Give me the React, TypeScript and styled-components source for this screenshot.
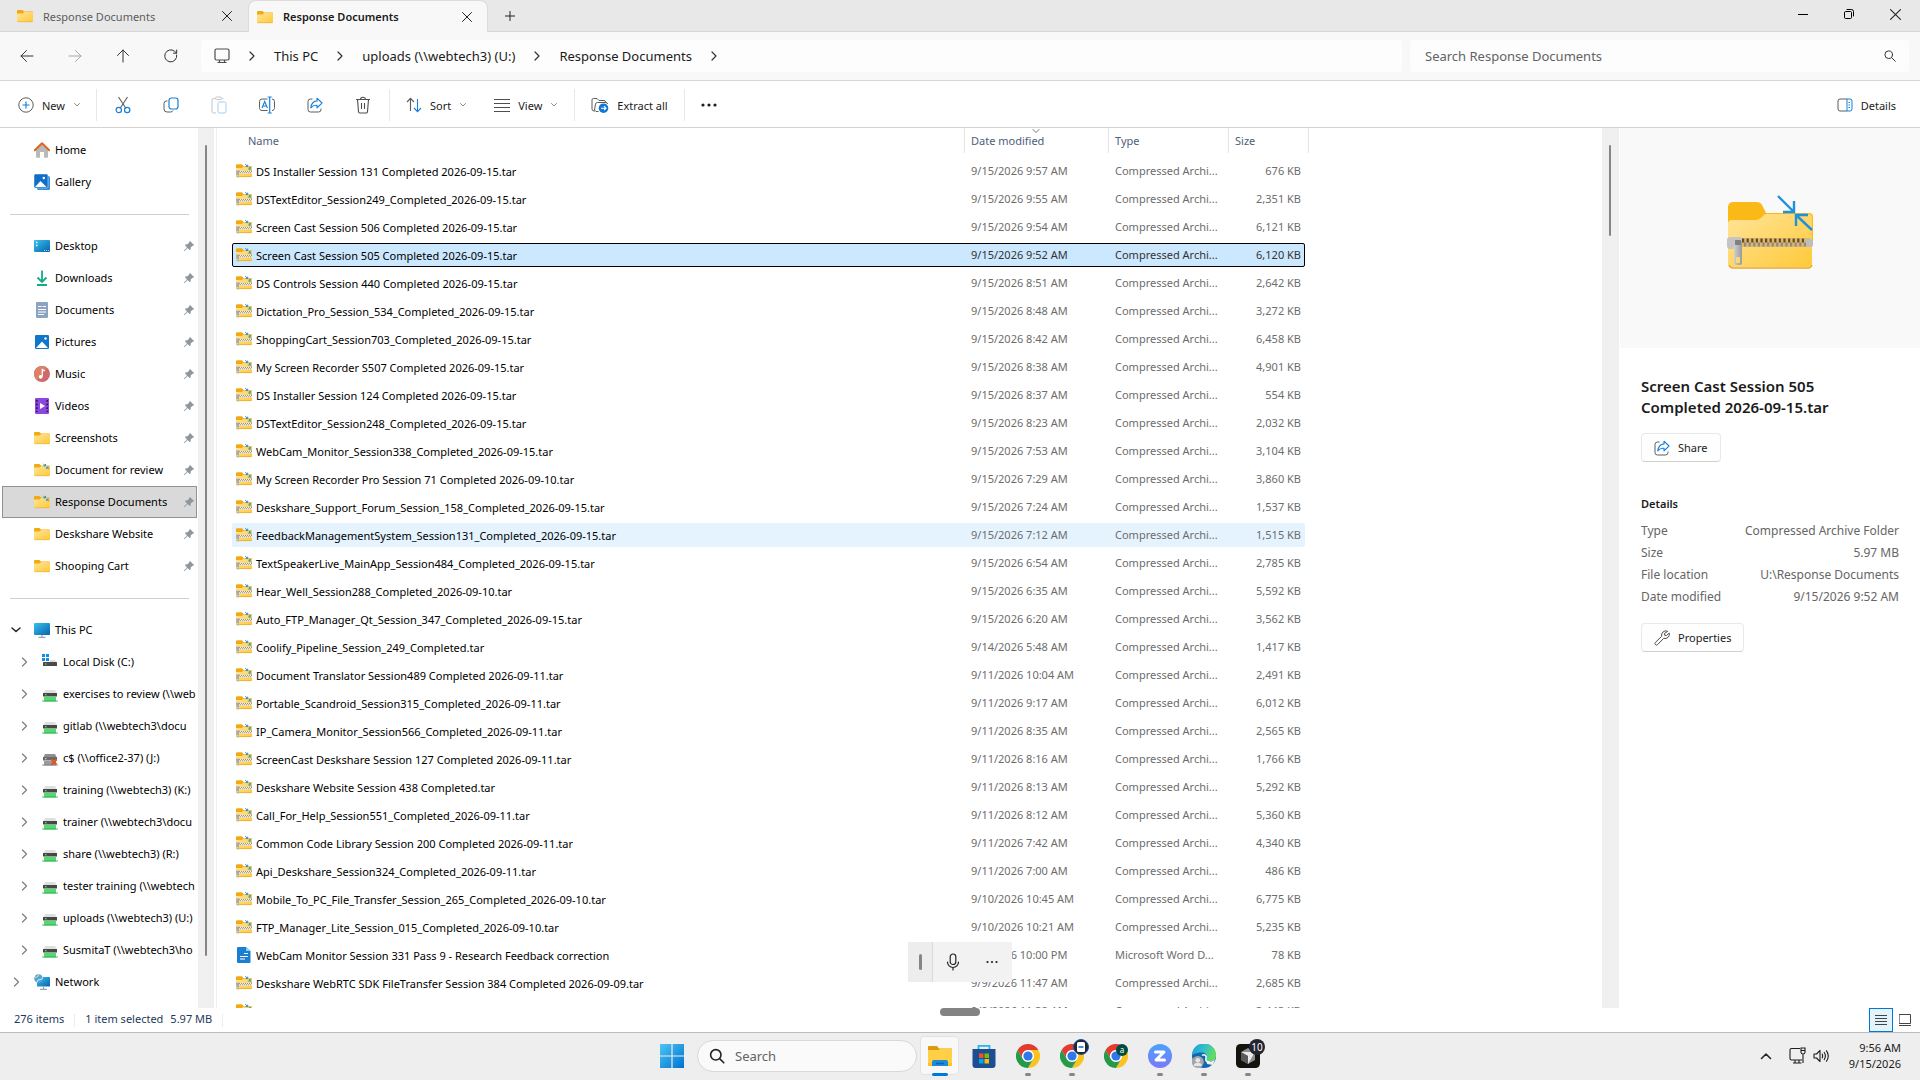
import React from "react";
import styled, { createGlobalStyle, css } from "styled-components";

const UI_FONT = `"Noto Sans", "Open Sans", sans-serif`;

const GlobalStyle = createGlobalStyle`
  *, *::before, *::after { box-sizing: border-box; }
  body {
    margin: 0;
    background: #ffffff;
    color: #1b1b1b;
    font-family: ${UI_FONT};
    font-size: 11px;
    overflow: hidden;
  }
  button, input { font: inherit; color: inherit; }
  button { background: none; border: 0; padding: 0; margin: 0; display: inline-flex; align-items: center; justify-content: center; cursor: default; }
  a { color: inherit; text-decoration: none; cursor: default; }
  svg { display: block; flex: none; }
`;

/* ---------- shell ---------- */

const Screen = styled.div`
  height: 100vh;
  display: grid;
  grid-template-rows: auto auto auto minmax(0, 1fr) auto auto;
  grid-template-columns: minmax(0, 1fr);
`;

const TitleBar = styled.header`
  display: flex;
  height: 32px;
  background: #e8e8e8;
  box-shadow: inset 0 -1px #d5d5d5;
`;

const Tab = styled.div<{ $active?: boolean }>`
  display: flex;
  align-items: center;
  width: ${(p) => (p.$active ? 240 : 248)}px;
  padding: 0 ${(p) => (p.$active ? 8 : 9)}px 0 ${(p) => (p.$active ? 8 : 17)}px;
  gap: 10px;
  color: #5c5c5c;
  ${(p) =>
    p.$active &&
    css`
      background: #f8f8f8;
      color: #1a1a1a;
      font-weight: 600;
      border-radius: 8px 8px 0 0;
      border: 1px solid #dcdcdc;
      border-bottom: 0;
    `}
`;

const TabLabel = styled.span`
  flex: 1;
`;

const TabClose = styled.button`
  width: 24px;
  height: 24px;
`;

const NewTab = styled.button`
  width: 44px;
`;

const WindowButtons = styled.div`
  display: flex;
  margin-left: auto;
  padding-right: 2px;
`;

const WindowButton = styled.button`
  width: 46px;
  height: 28px;
`;

const AddressRow = styled.div`
  display: flex;
  align-items: center;
  height: 49px;
  padding: 0 11px 0 3px;
  background: #f8f8f8;
  border-bottom: 1px solid #d6d6d6;
`;

const NavButton = styled.button`
  width: 48px;
  height: 32px;
`;

const Crumbs = styled.nav`
  flex: 1;
  display: flex;
  align-items: center;
  height: 32px;
  margin: 0 8px 0 6px;
  padding-left: 13px;
  background: #fdfdfd;
  border-radius: 4px;
  font-size: 13px;
`;

const CrumbGap = styled.span`
  width: 44px;
  display: flex;
  justify-content: center;
`;

const SearchField = styled.label`
  display: flex;
  align-items: center;
  width: 499px;
  height: 32px;
  padding: 0 13px 0 15px;
  background: #fdfdfd;
  border-radius: 4px;
  font-size: 13px;
`;

const BareInput = styled.input`
  flex: 1;
  min-width: 0;
  padding: 0;
  border: 0;
  outline: 0;
  background: transparent;
  &::placeholder { color: #636363; opacity: 1; }
`;

const Toolbar = styled.div`
  display: flex;
  align-items: center;
  height: 47px;
  padding: 2px 24px 0 18px;
  border-bottom: 1px solid #d3d3d3;
`;

const ToolButton = styled.button`
  gap: 8px;
  height: 32px;
`;

const IconTool = styled.button`
  width: 48px;
  height: 32px;
`;

const ToolSeparator = styled.span<{ $before?: number; $after?: number }>`
  width: 1px;
  height: 32px;
  background: #e8e8e8;
  margin: 0 ${(p) => p.$after ?? 16}px 0 ${(p) => p.$before ?? 16}px;
`;

const ToolGap = styled.span`
  width: 27px;
`;

const Spring = styled.span`
  flex: 1;
`;

const Body = styled.div`
  display: grid;
  grid-template-columns: 217px minmax(0, 1fr) 301px;
  min-height: 0;
`;

/* ---------- navigation pane ---------- */

const Pane = styled.div`
  display: flex;
  min-width: 0;
  min-height: 0;
  overflow: hidden;
`;

const SidePane = styled(Pane)`
  border-right: 1px solid #f0f0f0;
`;

const Side = styled.nav`
  width: 198px;
  padding-top: 6px;
  overflow: hidden;
`;

const SideItem = styled.a<{ $active?: boolean; $child?: boolean }>`
  display: flex;
  align-items: center;
  height: 32px;
  margin: 0 1px 0 2px;
  padding-left: ${(p) => (p.$child ? 8 : 0)}px;
  border: 1px solid ${(p) => (p.$active ? "#929292" : "transparent")};
  background: ${(p) => (p.$active ? "#d9d9d9" : "transparent")};
  color: #000;
  white-space: nowrap;
  overflow: hidden;
`;

const SideChevron = styled.span`
  width: 31px;
  padding-left: 8px;
`;

const SideLabel = styled.span`
  flex: 1;
  padding: 0 0 2px 5px;
`;

const SideRule = styled.hr`
  height: 1px;
  margin: 16px 9px 15px 10px;
  border: 0;
  background: #d0d0d0;
`;

const PinSlot = styled.span`
  width: 12px;
`;

const ScrollTrack = styled.div`
  display: flex;
  justify-content: center;
  width: 16px;
  padding-top: 17px;
  background: #f0f0f0;
`;

const ScrollThumb = styled.div<{ $size: string }>`
  width: 2px;
  height: ${(p) => p.$size};
  border-radius: 1px;
  background: #858585;
`;

/* ---------- file list ---------- */

const FilePane = styled(Pane)`
  justify-content: space-between;
  border-right: 1px solid #f0f0f0;
`;

const FileTable = styled.table`
  display: block;
  flex: 1;
  min-width: 0;
  padding-left: 15px;
  overflow: hidden;
  white-space: nowrap;
`;

const Head = styled.thead`
  display: block;
`;

const Rows = styled.tbody`
  display: block;
`;

const HeadRow = styled.tr`
  display: grid;
  grid-template-columns: 733px 144px 120px 80px;
  height: 25px;
  margin-bottom: 6px;
`;

const HeadCell = styled.th<{ $first?: boolean }>`
  padding: 0 0 0 ${(p) => (p.$first ? 16 : 6)}px;
  border-right: 1px solid #e5e5e5;
  color: #4c607a;
  font-weight: 400;
  line-height: 25px;
  text-align: left;
`;

const HeadSort = styled.span`
  display: flex;
  align-items: center;
  position: relative;
  svg { position: absolute; left: 61px; top: 0; }
`;

const FileRow = styled.tr<{ $state?: "selected" | "hover" }>`
  display: grid;
  grid-template-columns: 732px 144px 120px 75px;
  width: 1073px;
  height: 24px;
  margin-bottom: 4px;
  border: 1px solid transparent;
  border-radius: 2px;
  color: #6d6d6d;
  ${(p) =>
    p.$state === "selected" &&
    css`
      background: #cce8ff;
      border-color: #000;
      color: #333;
    `}
  ${(p) => p.$state === "hover" && css`background: #e5f3ff;`}
`;

const NameCell = styled.td`
  display: flex;
  align-items: center;
  gap: 4px;
  padding: 0 0 0 3px;
  color: #000;
`;

const Cell = styled.td<{ $right?: boolean }>`
  padding: 0 3px 0 6px;
  line-height: 22px;
  text-align: ${(p) => (p.$right ? "right" : "left")};
`;

/* ---------- details pane ---------- */

const DetailsPane = styled.aside`
  margin-left: 1px;
  min-width: 0;
  overflow: hidden;
`;

const Preview = styled.div`
  display: flex;
  align-items: center;
  justify-content: center;
  height: 220px;
  background: #f9f9f9;
`;

const DetailsBody = styled.div`
  padding: 28px 21px 0;
`;

const DetailsTitle = styled.h2`
  margin: 0 0 15px;
  font-size: 15px;
  font-weight: 600;
  line-height: 21px;
  width: 210px;
`;

const CardButton = styled.button`
  height: 29px;
  padding: 0 12px;
  gap: 8px;
  border: 1px solid #e9e9e9;
  border-bottom-color: #d0d0d0;
  border-radius: 4px;
  background: #fefefe;
`;

const DetailsHeading = styled.h3`
  margin: 31px 0 5px;
  font-size: 11px;
  font-weight: 600;
  line-height: 22px;
`;

const Facts = styled.dl`
  display: grid;
  grid-template-columns: auto 1fr;
  margin: 0 0 15px;
  font-size: 12px;
  line-height: 22px;
  color: #666;
`;

const FactName = styled.dt``;

const FactValue = styled.dd`
  margin: 0;
  text-align: right;
`;

/* ---------- status bar ---------- */

const StatusBar = styled.footer`
  display: flex;
  align-items: center;
  height: 25px;
  padding: 0 3px 0 14px;
  border-bottom: 1px solid #bcbcbc;
  color: #1e395b;
  line-height: 14px;
`;

const StatusText = styled.span`
  padding-bottom: 2px;
`;

const StatusSeparator = styled.span`
  width: 1px;
  height: 13px;
  margin: 0 10px;
  background: #ededed;
`;

const StatusSize = styled(StatusText)`
  margin-left: 7px;
`;

const ViewButton = styled.button<{ $on?: boolean }>`
  width: 24px;
  height: 24px;
  border: 1px solid ${(p) => (p.$on ? "#0078d7" : "transparent")};
  background: ${(p) => (p.$on ? "#e3f3fc" : "transparent")};
`;

/* ---------- taskbar ---------- */

const Taskbar = styled.footer`
  display: grid;
  grid-template-columns: 1fr auto 1fr;
  grid-template-rows: 45px;
  height: 47px;
  background: #eeeeee;
`;

const TaskCenter = styled.div`
  grid-column: 2;
  display: flex;
  align-items: center;
  padding-left: 10px;
`;

const TaskSearch = styled.label`
  display: flex;
  align-items: center;
  gap: 10px;
  width: 220px;
  height: 32px;
  margin: 0 1px 0 13px;
  padding: 0 12px 0 11px;
  border: 1px solid #d8d8d8;
  border-radius: 16px;
  background: #fafafa;
  font-size: 13px;
`;

const TaskButton = styled.button`
  position: relative;
  flex-direction: column;
  width: 44px;
  height: 45px;
  padding-top: 11px;
  gap: 5px;
  justify-content: flex-start;
`;

const ActivePlate = styled.span`
  position: absolute;
  inset: 3px 3px 3px 2px;
  border: 1px solid #e2e2e2;
  border-radius: 4px;
  background: #f8f8f8;
`;

const StartButton = styled.button`
  width: 24px;
`;

const TaskMark = styled.span<{ $active?: boolean }>`
  position: relative;
  width: ${(p) => (p.$active ? 16 : 6)}px;
  height: 3px;
  border-radius: 2px;
  background: ${(p) => (p.$active ? "#0078d7" : "#868686")};
`;

const TaskIcon = styled.span`
  position: relative;
  display: block;
`;

const Badge = styled.span<{ $kind: "count" | "letter" | "mail" }>`
  position: absolute;
  display: flex;
  align-items: center;
  justify-content: center;
  right: ${(p) => (p.$kind === "letter" ? 0 : -5)}px;
  top: ${(p) => (p.$kind === "letter" ? 0 : -5)}px;
  width: ${(p) => (p.$kind === "letter" ? 12 : 16)}px;
  height: ${(p) => (p.$kind === "letter" ? 12 : 16)}px;
  border-radius: 50%;
  background: ${(p) => (p.$kind === "letter" ? "#004d40" : "#23252f")};
  border: ${(p) => (p.$kind === "mail" ? "1px solid #1a56a8" : "0")};
  color: #fff;
  font-size: ${(p) => (p.$kind === "letter" ? 8 : 10)}px;
  line-height: 12px;
`;

const Tray = styled.div`
  grid-column: 3;
  display: flex;
  align-items: center;
  justify-content: flex-end;
  padding-right: 19px;
`;

const TrayButton = styled.button`
  width: 24px;
  height: 32px;
`;

const TrayChevron = styled.button`
  width: 30px;
  height: 32px;
  margin-right: 5px;
`;

const Clock = styled.button`
  flex-direction: column;
  align-items: flex-end;
  margin-left: 15px;
  line-height: 16px;
`;

/* ---------- floating things ---------- */

const VoiceBar = styled.div`
  position: fixed;
  left: 908px;
  bottom: 98px;
  display: flex;
  width: 104px;
  height: 40px;
  background: #f2f2f2;
`;

const VoiceGrip = styled.span`
  display: flex;
  align-items: center;
  justify-content: center;
  width: 25px;
  border-right: 1px solid #dadada;
  background: #ededed;
  &::before {
    content: "";
    width: 3px;
    height: 16px;
    border-radius: 2px;
    background: #868686;
  }
`;

const VoiceButton = styled.button`
  width: 39px;
`;

const Pill = styled.div`
  position: fixed;
  left: 940px;
  bottom: 64px;
  width: 40px;
  height: 8px;
  border-radius: 4px;
  background: #838383;
`;

/* ---------- icons ---------- */

type P = { d: string; s?: number; w?: number; c?: string; vb?: number };
const Line = ({ d, s = 16, w = 1, c = "#333", vb }: P) => (
  <svg width={s} height={s} viewBox={`0 0 ${vb ?? s} ${vb ?? s}`} fill="none" stroke={c} strokeWidth={w} strokeLinecap="round" strokeLinejoin="round">
    <path d={d} />
  </svg>
);

const Chevron = ({ c = "#333" }: { c?: string }) => <Line s={10} c={c} w={1.2} d="M3 1 7 5 3 9" />;
const Caret = () => <Line s={8} c="#8a8a8a" d="M1.5 2.5 4 5 6.5 2.5" />;
const Close = ({ s = 10 }: { s?: number }) => <Line s={s} vb={10} c="#222" d="M.5 .5 9.5 9.5M9.5 .5 .5 9.5" />;

const GradientDefs = styled.svg`
  position: absolute;
  width: 0;
  height: 0;
`;

const Gradients = () => (
  <GradientDefs aria-hidden="true">
    <defs>
      <linearGradient id="fold" x1="0" y1="0" x2="1" y2="1">
        <stop offset="0" stopColor="#ffe49a" />
        <stop offset="1" stopColor="#ffc938" />
      </linearGradient>
      <linearGradient id="blue" x1="0" y1="0" x2="1" y2="1">
        <stop offset="0" stopColor="#34c3ee" />
        <stop offset="1" stopColor="#0b62ad" />
      </linearGradient>
      <linearGradient id="win" x1="0" y1="0" x2="1" y2="1">
        <stop offset="0" stopColor="#4cc5f5" />
        <stop offset="1" stopColor="#0072d0" />
      </linearGradient>
      <linearGradient id="metal" x1="0" y1="0" x2="1" y2="0">
        <stop offset="0" stopColor="#cfcfcf" />
        <stop offset="1" stopColor="#9a9a9a" />
      </linearGradient>
    </defs>
  </GradientDefs>
);

const Folder = ({ linked }: { linked?: boolean }) => (
  <svg width="16" height="16" viewBox="0 0 16 16">
    <path d="M0 3a1 1 0 0 1 1-1h4.5L7 3.500h8a1 1 0 0 1 1 1V8H0z" fill="#f3a912" />
    <path d="M0 5.600h5.600L7.200 4H15a1 1 0 0 1 1 1v8a1 1 0 0 1-1 1H1a1 1 0 0 1-1-1z" fill="url(#fold)" />
    <path d="M.5 13.700h15" stroke="#e9ae2a" strokeWidth=".6" />
    {linked && <path d="M9.300 1.800l2.200 2.200m0-2v2h-2M15 7.300l-2.200-2.200m0 2v-2h2" stroke="#2490cf" strokeWidth="1" fill="none" />}
  </svg>
);

const ZipFolder = () => (
  <svg width="16" height="16" viewBox="0 0 16 16">
    <path d="M0 2.300a1 1 0 0 1 1-1h5L7.500 3H15a1 1 0 0 1 1 1v3H0z" fill="#f3a912" />
    <path d="M0 5h6l1.500-1.600H15a1 1 0 0 1 1 1V13a1 1 0 0 1-1 1H1a1 1 0 0 1-1-1z" fill="url(#fold)" />
    <path d="M.5 13.600h15" stroke="#e3a627" strokeWidth=".7" />
    <path d="M3 9.200h13" stroke="#f1f1f1" strokeWidth="2.600" />
    <path d="M3 8.600h13" stroke="#888" strokeWidth="1" strokeDasharray="1 1" />
    <path d="M4 9.700h12" stroke="#999" strokeWidth="1" strokeDasharray="1 1" />
    <path d="M.2 7.600h3v2.200l-.6 4.800H1L.2 10z" fill="#a9a9a9" />
    <rect x="1.200" y="12" width="1" height="1.500" fill="#f7e7a8" />
    <path d="M9.300 1.200l2.400 2.400m0-2v2h-2M15.500 7l-2.400-2.200m0 2v-2h2" stroke="#2490cf" strokeWidth="1" fill="none" />
  </svg>
);

const BigZip = () => (
  <svg width="86" height="92" viewBox="0 0 86 92">
    <path d="M1 15a5 5 0 0 1 5-5h23c3 0 5 1 6 3l4 8h43a4 4 0 0 1 4 4v25H1z" fill="#fbb917" />
    <path d="M1 32a4 4 0 0 1 4-4h23c3 0 5-1 7-3l2-2c1-1 2-1 4-1h40a4 4 0 0 1 4 4v45a4 4 0 0 1-4 4H5a4 4 0 0 1-4-4z" fill="url(#fold)" />
    <path d="M2 73q1 3 4 3h75q3 0 4-3" stroke="#e5a82b" strokeWidth="1.400" fill="none" />
    <rect x="13" y="46" width="70" height="9" fill="#d9b877" />
    <path d="M15 48.500h62" stroke="#6b4a16" strokeWidth="4" strokeDasharray="2.200 2.400" />
    <path d="M17 52.500h62" stroke="#8f8a7e" strokeWidth="4" strokeDasharray="2.200 2.400" />
    <rect x="79" y="47" width="7" height="8" rx="2" fill="#bdbdbd" />
    <path d="M0 48q0-3 4-3h9q2 0 2 3v5H8l-2 4H3q-3 0-3-3z" fill="#c4c4c4" />
    <rect x="7" y="49" width="8" height="24" rx="2" fill="url(#metal)" />
    <rect x="8" y="48" width="6" height="5" fill="#808080" />
    <rect x="9" y="65" width="4" height="6" rx="1" fill="#f9d879" />
    <path d="M51 4l16 16M67 9v11H56M85 38L69 23M69 34V23h12" stroke="#1f92dc" strokeWidth="2.400" fill="none" />
  </svg>
);

const WordDoc = () => (
  <svg width="16" height="16" viewBox="0 0 16 16">
    <path d="M2 0h8l4.500 4v11a1 1 0 0 1-1 1H2a1 1 0 0 1-1-1V1a1 1 0 0 1 1-1z" fill="#1a7fd0" />
    <path d="M10 0l4.500 4H10z" fill="#7fd6fb" />
    <path d="M8 6.500h4M4 9.500h8M4 12h5" stroke="#fff" strokeWidth="1.200" />
  </svg>
);

const Home = () => (
  <svg width="16" height="16" viewBox="0 0 16 16">
    <path d="M2 7l6-5.500L14 7v8a.8.8 0 0 1-.8.8H10V10H6v5.800H2.800A.8.800 0 0 1 2 15z" fill="#b9b9b9" />
    <path d="M.8 8.200L8 1.300l7.200 6.900" fill="none" stroke="#e0651c" strokeWidth="2" strokeLinejoin="round" strokeLinecap="round" />
  </svg>
);

const Gallery = () => (
  <svg width="16" height="16" viewBox="0 0 16 16">
    <rect x="3" y="2" width="13" height="14" rx="1.500" fill="#2f8fd9" />
    <rect x="0" y="0" width="14" height="14" rx="1.500" fill="#0f6fc8" stroke="#e9f5ff" strokeWidth=".5" />
    <path d="M1 13l5.500-6 6 6z" fill="#fff" />
    <circle cx="9.800" cy="4" r="1.200" fill="#fff" />
  </svg>
);

const Desktop = () => (
  <svg width="16" height="16" viewBox="0 0 16 16">
    <rect x="0" y="2" width="16" height="12" rx="1" fill="url(#blue)" />
    <path d="M2 4.500h1.500M2 7.500h1.500" stroke="#fff" strokeWidth="1.500" />
    <path d="M10 12.500h5" stroke="#9bd6f5" strokeWidth="1" strokeDasharray="1 1" />
  </svg>
);

const Download = () => (
  <svg width="16" height="16" viewBox="0 0 16 16" fill="none" stroke="#14ab84" strokeWidth="1.800">
    <path d="M8 .5v11M3.500 7.500L8 12l4.500-4.500M3 15h10" />
  </svg>
);

const Documents = () => (
  <svg width="16" height="16" viewBox="0 0 16 16">
    <rect x="2" y="0" width="12" height="16" rx="1" fill="#8ba4c2" />
    <path d="M4 4.500h3.500M8.500 4.500H12M4 7.500h8M4 10h8M4 12.500h6" stroke="#fff" strokeWidth="1.200" />
  </svg>
);

const Pictures = () => (
  <svg width="16" height="16" viewBox="0 0 16 16">
    <rect x="1" y="1" width="14" height="14" rx="1.200" fill="#0f76ce" />
    <path d="M2 14l6-6.500 6 6.500z" fill="#fff" />
    <circle cx="11.500" cy="4.500" r="1.200" fill="#fff" />
  </svg>
);

const Music = () => (
  <svg width="16" height="16" viewBox="0 0 16 16">
    <circle cx="8" cy="8" r="8" fill="#cd6a6c" />
    <path d="M0 8a8 8 0 0 1 13-6.200L3 14.200A8 8 0 0 1 0 8z" fill="#dc8068" />
    <path d="M8.300 10.500V3.500L11 5" fill="none" stroke="#fff" strokeWidth="1.300" />
    <circle cx="6.700" cy="10.800" r="1.900" fill="#fff" />
  </svg>
);

const Videos = () => (
  <svg width="16" height="16" viewBox="0 0 16 16">
    <rect x="1" y="0" width="14" height="16" rx="1" fill="#8c46df" />
    <path d="M2.800 2v12M13.200 2v12" stroke="#2d1457" strokeWidth="1.600" strokeDasharray="1.800 1.800" />
    <path d="M6 5l5 3-5 3z" fill="#fff" />
  </svg>
);

const ThisPC = () => (
  <svg width="16" height="16" viewBox="0 0 16 16">
    <rect x="0" y="1" width="16" height="12" rx="1" fill="url(#blue)" />
    <path d="M8 13v2M4.500 15.300h7" stroke="#9aa5ad" strokeWidth="1.200" />
  </svg>
);

const Disk = () => (
  <svg width="16" height="16" viewBox="0 0 16 16">
    <path d="M0 0h3v3H0zM4 0h3v3H4zM0 4h3v3H0zM4 4h3v3H4z" fill="#0f8fe5" />
    <path d="M8 6h5l1.500 2.500H1V8h7z" fill="#dedede" />
    <rect x="1" y="8" width="14" height="4" rx=".5" fill="#4a4a4a" />
    <rect x="3" y="9.500" width="1.500" height="1" fill="#7cf08a" />
  </svg>
);

const NetDrive = ({ off }: { off?: boolean }) => (
  <svg width="16" height="16" viewBox="0 -1 16 16">
    <path d="M3 3h10l2 4H1z" fill={off ? "#8f8f8f" : "#dfdfdf"} />
    <rect x="1" y="6" width="14" height="3.500" fill={off ? "#6a6a6a" : "#474747"} />
    <rect x="3" y="7.200" width="1.500" height="1" fill={off ? "#ddd" : "#7cf08a"} />
    <rect x="2" y="10" width="12" height="4.500" fill={off ? "#9b9b9b" : "#4fdc6c"} />
    <path d="M0 14h16" stroke={off ? "#777" : "#2ba54a"} strokeWidth=".8" />
    {off && <path d="M9.500 8.500l5 5M14.500 8.500l-5 5" stroke="#e2531f" strokeWidth="1.800" />}
  </svg>
);

const Network = () => (
  <svg width="16" height="16" viewBox="0 0 16 16">
    <rect x="3" y="3" width="13" height="9.500" rx=".5" fill="url(#blue)" />
    <path d="M9.500 12.500v2.500M6 15.300h7" stroke="#9aa5ad" strokeWidth="1.200" />
    <circle cx="4.500" cy="4.500" r="4.300" fill="#5aa3c9" />
    <path d="M1 3q3 1 3.500-2.500M3 8.500q0-3 3-3t2.500-2" stroke="#cfe9f5" strokeWidth="1" fill="none" />
  </svg>
);

const Pin = () => (
  <svg width="10" height="10" viewBox="0 0 10 10" fill="#8e979f">
    <path d="M6 0l4 4-1 1-.6-.3L6.800 6.500 6.500 8.600l-.8.400L3.600 7 .6 10H0v-.6l3-3L1 4.300l.4-.8 2.100-.3L5.300 1.600 5 1z" />
  </svg>
);

const Scissors = () => (
  <svg width="16" height="18" viewBox="0 0 16 18" fill="none">
    <path d="M3.500 1L11 12.500M12.500 1L5 12.500" stroke="#5c5c5c" strokeWidth="1.100" />
    <circle cx="3.800" cy="14" r="2.700" stroke="#1681dc" strokeWidth="1.200" />
    <circle cx="12.200" cy="14" r="2.700" stroke="#1681dc" strokeWidth="1.200" />
  </svg>
);

const Copy = () => (
  <svg width="16" height="16" viewBox="0 0 16 16" fill="none">
    <path d="M4.500 4H3.200A2.500 2.500 0 0 0 1 6.500V12a3 3 0 0 0 3 3h3.500A2.500 2.500 0 0 0 10 13.500" stroke="#5c5c5c" />
    <rect x="6" y="1" width="9" height="11" rx="2.500" stroke="#1681dc" strokeWidth="1.200" />
  </svg>
);

const Paste = () => (
  <svg width="16" height="18" viewBox="0 0 16 18" fill="none">
    <path d="M4 2.500H2.500A1.500 1.500 0 0 0 1 4v11.500A1.500 1.500 0 0 0 2.500 17H5M11 2.500h1.200" stroke="#c4c4c4" />
    <rect x="4.500" y="1" width="6" height="2.600" rx="1.200" stroke="#c4c4c4" />
    <rect x="7" y="6" width="8" height="11" rx="1.500" stroke="#a4cef0" />
  </svg>
);

const Rename = () => (
  <svg width="18" height="18" viewBox="0 0 18 18" fill="none">
    <path d="M9.500 3H4a2.500 2.500 0 0 0-2.500 2.500v6A2.500 2.500 0 0 0 4 14.500h5.500M14 3a2.500 2.500 0 0 1 2.500 2.500v6a2.500 2.500 0 0 1-2.500 3" stroke="#5c5c5c" />
    <path d="M4 12l2.700-6.500L9.400 12M5 10h3.500" stroke="#1681dc" strokeWidth="1.100" />
    <path d="M11.700 1v16M9.700 1h4M9.700 17h4" stroke="#1681dc" strokeWidth="1.200" />
  </svg>
);

const Share = () => (
  <svg width="16" height="16" viewBox="0 0 16 16" fill="none">
    <path d="M5.500 2H3.500A2.500 2.500 0 0 0 1 4.500v8A2.500 2.500 0 0 0 3.500 15h8a2.500 2.500 0 0 0 2.500-2.500v-1" stroke="#5c5c5c" />
    <path d="M10 1.200L15 6l-5 4.800V8.300Q6 8 3.800 10.800 4.500 4.500 10 3.900z" stroke="#1681dc" strokeWidth="1.100" strokeLinejoin="round" />
  </svg>
);

const Trash = () => (
  <svg width="16" height="18" viewBox="0 0 16 18" fill="none" stroke="#4f4f4f">
    <path d="M1 3.500h14M5.500 3.500a2.500 2.300 0 0 1 5 0M2.500 3.500l1 12a1.500 1.500 0 0 0 1.500 1.500h6a1.500 1.500 0 0 0 1.500-1.500l1-12M6.500 7v6M9.500 7v6" strokeWidth="1.100" />
  </svg>
);

const Sort = () => (
  <svg width="16" height="16" viewBox="0 0 16 16" fill="none">
    <path d="M4.500 14V1.500M1 5l3.500-3.700L8 5" stroke="#5c5c5c" strokeWidth="1.100" />
    <path d="M11.500 2v12.500M8 11l3.500 3.700L15 11" stroke="#1681dc" strokeWidth="1.100" />
  </svg>
);

const Extract = () => (
  <svg width="18" height="16" viewBox="0 0 18 16" fill="none">
    <path d="M4 14H3a2 2 0 0 1-2-2V3a1.500 1.500 0 0 1 1.500-1.500H6L8 3.500h5A1.500 1.500 0 0 1 14.500 5" stroke="#5c5c5c" />
    <path d="M7.500 14.500H5L3.500 13 4.500 7a2 2 0 0 1 2-1.500h8.500a1.500 1.500 0 0 1 1.500 1.500" stroke="#5c5c5c" />
    <circle cx="12.500" cy="11.200" r="4.800" fill="#1177d4" />
    <path d="M10 11.200h5M13 9.200l2 2-2 2" stroke="#fff" strokeWidth="1.100" />
  </svg>
);

const DetailsIcon = () => (
  <svg width="16" height="14" viewBox="0 0 16 14" fill="none">
    <path d="M10 1H3a2 2 0 0 0-2 2v8a2 2 0 0 0 2 2h7" stroke="#5c5c5c" />
    <path d="M10 1h3a2 2 0 0 1 2 2v8a2 2 0 0 1-2 2h-3zM11.500 4.500H13M11.500 7H13M11.500 9.500H13" stroke="#1681dc" />
  </svg>
);

const Dots = ({ r = 1.4 }: { r?: number }) => {
  const step = r > 1.3 ? 6 : 4.5;
  return (
    <svg width="16" height="6" viewBox="0 0 16 6" fill="#1d1d1d">
      <circle cx={8 - step} cy="3" r={r} />
      <circle cx="8" cy="3" r={r} />
      <circle cx={8 + step} cy="3" r={r} />
    </svg>
  );
};

const Wrench = () => (
  <svg width="16" height="16" viewBox="0 0 16 16" fill="none" stroke="#4f4f4f" strokeLinejoin="round">
    <path d="M13.700 1.300a4.300 4.300 0 0 0-6 5L1.400 12.400a1.500 1.500 0 0 0 2.200 2.200L9.700 8.300a4.300 4.300 0 0 0 5.500-5.300L12.500 5.500l-1.800-.2-.2-1.800z" />
  </svg>
);

const Windows = () => (
  <svg width="24" height="24" viewBox="0 0 24 24">
    <path d="M0 0h11.400v11.400H0zM12.600 0H24v11.400H12.600zM0 12.600h11.400V24H0zM12.600 12.600H24V24H12.600z" fill="url(#win)" />
  </svg>
);

const Explorer = () => (
  <svg width="24" height="24" viewBox="0 0 24 24">
    <path d="M0 3a1 1 0 0 1 1-1h8l2 2.500H23a1 1 0 0 1 1 1V12H0z" fill="#dc9a10" />
    <path d="M0 6h11l1.500-1.500H24V22H0z" fill="#ffcf45" />
    <path d="M0 22v-3h24v3z" fill="#ffc124" />
    <path d="M4 22v-4a2 2 0 0 1 2-2h12a2 2 0 0 1 2 2v4z" fill="#1c8ad6" />
    <path d="M8 19.500h8" stroke="#0b62ad" strokeWidth="1.500" />
  </svg>
);

const Store = () => (
  <svg width="24" height="24" viewBox="0 0 24 24">
    <path d="M6.500 6V1.800h11V6" fill="none" stroke="#25b6ee" strokeWidth="1.800" />
    <path d="M.5 5h23v16a3 3 0 0 1-3 3h-17a3 3 0 0 1-3-3z" fill="#1c4f91" />
    <path d="M7 9.500h4.500V14H7z" fill="#f25022" />
    <path d="M12.500 9.500H17V14h-4.500z" fill="#7fba00" />
    <path d="M7 15h4.500v4.500H7z" fill="#00a4ef" />
    <path d="M12.500 15H17v4.500h-4.500z" fill="#ffb900" />
  </svg>
);

const Chrome = () => {
  const wedge = "M12 6H22.400A12 12 0 0 0 1.600 6L6.800 15A6 6 0 0 1 12 6Z";
  return (
    <svg width="24" height="24" viewBox="0 0 24 24">
      <circle cx="12" cy="12" r="7" fill="#fff" />
      <path d={wedge} fill="#e33b2e" />
      <path d={wedge} fill="#fcc31e" transform="rotate(120 12 12)" />
      <path d={wedge} fill="#269a48" transform="rotate(240 12 12)" />
      <circle cx="12" cy="12" r="5.500" fill="#fff" />
      <circle cx="12" cy="12" r="4.600" fill="#2f78ea" />
    </svg>
  );
};

const ZIcon = () => (
  <svg width="24" height="24" viewBox="0 0 24 24">
    <defs>
      <linearGradient id="zg" x1="0" y1="0" x2="0" y2="1">
        <stop offset="0" stopColor="#4ba3fb" />
        <stop offset="1" stopColor="#7b78f8" />
      </linearGradient>
    </defs>
    <circle cx="12" cy="12" r="12" fill="url(#zg)" />
    <path d="M7.500 8h8.500l-8 8h8.500" stroke="#fff" strokeWidth="3" fill="none" strokeLinejoin="round" strokeLinecap="round" />
  </svg>
);

const Edge = () => (
  <svg width="24" height="24" viewBox="0 0 24 24">
    <defs>
      <linearGradient id="eg" x1="0" y1="0" x2="1" y2=".3">
        <stop offset="0" stopColor="#1f9fe0" />
        <stop offset=".6" stopColor="#35c1c4" />
        <stop offset="1" stopColor="#63dd5f" />
      </linearGradient>
    </defs>
    <circle cx="12" cy="12" r="12" fill="#1264b5" />
    <path d="M24 12.500c-.5 3.500-3.500 5-6.500 5s-4.500-1.500-3.500-3l1 5.500 6 1z" fill="#eeeeee" />
    <path d="M0 11A12 12 0 0 1 24 11.500c0 4-3.500 6-6.500 6s-4.500-1.500-3.500-3 1-6-4.500-6S0 11 0 11z" fill="url(#eg)" />
    <path d="M10 11.500c2.500-2 5 .5 4 3s.5 3.500 4 3.500" stroke="#eef6fb" strokeWidth="1.600" fill="none" />
    <circle cx="5.800" cy="18" r="6" fill="#a6a6a6" />
    <circle cx="5.800" cy="16.200" r="2.300" fill="#e6e6e6" />
    <path d="M1.800 22a4 3.200 0 0 1 8 0z" fill="#e6e6e6" />
  </svg>
);

const Cube = () => (
  <svg width="24" height="24" viewBox="0 0 24 24">
    <rect width="24" height="24" rx="4.500" fill="#15130e" />
    <path d="M12 4l7 4v8l-7 4-7-4V8z" fill="#8d8d8d" />
    <path d="M5 8h14l-7 12V12z" fill="#e9e9e9" />
    <path d="M5 8l7 4v8l-7-4z" fill="#5a5a5a" />
  </svg>
);

const MailGlyph = () => (
  <svg width="8" height="10" viewBox="0 0 8 10">
    <rect x="0" y="0" width="8" height="10" rx="1.500" fill="#fff" />
    <path d="M1.500 5h5" stroke="#3b7dd8" strokeWidth="1.800" />
  </svg>
);

const Monitor = () => (
  <svg width="16" height="16" viewBox="0 0 16 16" fill="none" stroke="#4d4d4d" strokeWidth="1.200">
    <rect x="1" y="1" width="14" height="11" rx="1.500" />
    <path d="M5.500 12v2.500M10.500 12v2.500M3.500 14.500h9" />
  </svg>
);

const NetTray = () => (
  <svg width="17" height="17" viewBox="0 0 17 17" fill="none" stroke="#1d1d1d" strokeWidth="1.100">
    <path d="M11 1.500H2.500A1.500 1.500 0 0 0 1 3v8.500A1.500 1.500 0 0 0 2.500 13H13M6 13v2.500M10 13v2.500M4 16h8.500" />
    <path d="M12 1h4v4.500q-.3 1.500-2 1.500t-2-1.500zM12 3.500h4M14 7v9" />
  </svg>
);

const Volume = () => (
  <svg width="17" height="16" viewBox="0 0 17 16" fill="none" stroke="#1d1d1d" strokeWidth="1.100">
    <path d="M1 6h2.500L7 2.500v11L3.500 10H1zM9 5.800q1.300 2.200 0 4.400M11 4q2.800 4 0 8M13.200 2.300q4.200 5.700 0 11.400" strokeLinejoin="round" />
  </svg>
);

const Mic = () => (
  <svg width="14" height="18" viewBox="0 0 14 18" fill="none" stroke="#222" strokeWidth="1.200" strokeLinecap="round">
    <rect x="4.200" y="1" width="5.600" height="10.500" rx="2.800" />
    <path d="M1.500 9a5.500 5.500 0 0 0 11 0M7 14.500V17" />
  </svg>
);

/* ---------- data ---------- */

const ZIP = "Compressed Archi...";
const files: [string, string, string][] = [
  ["DS Installer Session 131 Completed 2026-09-15.tar", "9/15/2026 9:57 AM", "676 KB"],
  ["DSTextEditor_Session249_Completed_2026-09-15.tar", "9/15/2026 9:55 AM", "2,351 KB"],
  ["Screen Cast Session 506 Completed 2026-09-15.tar", "9/15/2026 9:54 AM", "6,121 KB"],
  ["Screen Cast Session 505 Completed 2026-09-15.tar", "9/15/2026 9:52 AM", "6,120 KB"],
  ["DS Controls Session 440 Completed 2026-09-15.tar", "9/15/2026 8:51 AM", "2,642 KB"],
  ["Dictation_Pro_Session_534_Completed_2026-09-15.tar", "9/15/2026 8:48 AM", "3,272 KB"],
  ["ShoppingCart_Session703_Completed_2026-09-15.tar", "9/15/2026 8:42 AM", "6,458 KB"],
  ["My Screen Recorder S507 Completed 2026-09-15.tar", "9/15/2026 8:38 AM", "4,901 KB"],
  ["DS Installer Session 124 Completed 2026-09-15.tar", "9/15/2026 8:37 AM", "554 KB"],
  ["DSTextEditor_Session248_Completed_2026-09-15.tar", "9/15/2026 8:23 AM", "2,032 KB"],
  ["WebCam_Monitor_Session338_Completed_2026-09-15.tar", "9/15/2026 7:53 AM", "3,104 KB"],
  ["My Screen Recorder Pro Session 71 Completed 2026-09-10.tar", "9/15/2026 7:29 AM", "3,860 KB"],
  ["Deskshare_Support_Forum_Session_158_Completed_2026-09-15.tar", "9/15/2026 7:24 AM", "1,537 KB"],
  ["FeedbackManagementSystem_Session131_Completed_2026-09-15.tar", "9/15/2026 7:12 AM", "1,515 KB"],
  ["TextSpeakerLive_MainApp_Session484_Completed_2026-09-15.tar", "9/15/2026 6:54 AM", "2,785 KB"],
  ["Hear_Well_Session288_Completed_2026-09-10.tar", "9/15/2026 6:35 AM", "5,592 KB"],
  ["Auto_FTP_Manager_Qt_Session_347_Completed_2026-09-15.tar", "9/15/2026 6:20 AM", "3,562 KB"],
  ["Coolify_Pipeline_Session_249_Completed.tar", "9/14/2026 5:48 AM", "1,417 KB"],
  ["Document Translator Session489 Completed 2026-09-11.tar", "9/11/2026 10:04 AM", "2,491 KB"],
  ["Portable_Scandroid_Session315_Completed_2026-09-11.tar", "9/11/2026 9:17 AM", "6,012 KB"],
  ["IP_Camera_Monitor_Session566_Completed_2026-09-11.tar", "9/11/2026 8:35 AM", "2,565 KB"],
  ["ScreenCast Deskshare Session 127 Completed 2026-09-11.tar", "9/11/2026 8:16 AM", "1,766 KB"],
  ["Deskshare Website Session 438 Completed.tar", "9/11/2026 8:13 AM", "5,292 KB"],
  ["Call_For_Help_Session551_Completed_2026-09-11.tar", "9/11/2026 8:12 AM", "5,360 KB"],
  ["Common Code Library Session 200 Completed 2026-09-11.tar", "9/11/2026 7:42 AM", "4,340 KB"],
  ["Api_Deskshare_Session324_Completed_2026-09-11.tar", "9/11/2026 7:00 AM", "486 KB"],
  ["Mobile_To_PC_File_Transfer_Session_265_Completed_2026-09-10.tar", "9/10/2026 10:45 AM", "6,775 KB"],
  ["FTP_Manager_Lite_Session_015_Completed_2026-09-10.tar", "9/10/2026 10:21 AM", "5,235 KB"],
  ["WebCam Monitor Session 331 Pass 9 - Research Feedback correction", "9/9/2026 10:00 PM", "78 KB"],
  ["Deskshare WebRTC SDK FileTransfer Session 384 Completed 2026-09-09.tar", "9/9/2026 11:47 AM", "2,685 KB"],
  ["Hear_Well_Session288_Completed_2026-09-09.tar", "9/9/2026 11:38 AM", "3,443 KB"],
];

const pinned: [string, React.ReactNode][] = [
  ["Desktop", <Desktop />],
  ["Downloads", <Download />],
  ["Documents", <Documents />],
  ["Pictures", <Pictures />],
  ["Music", <Music />],
  ["Videos", <Videos />],
  ["Screenshots", <Folder />],
  ["Document for review", <Folder linked />],
  ["Response Documents", <Folder linked />],
  ["Deskshare Website", <Folder />],
  ["Shooping Cart", <Folder />],
];

const drives = [
  "exercises to review (\\\\web",
  "gitlab (\\\\webtech3\\docu",
  "c$ (\\\\office2-37) (J:)",
  "training (\\\\webtech3) (K:)",
  "trainer (\\\\webtech3\\docu",
  "share (\\\\webtech3) (R:)",
  "tester training (\\\\webtech",
  "uploads (\\\\webtech3) (U:)",
  "SusmitaT (\\\\webtech3\\ho",
];

const SideEntry = ({ icon, label, active, child, chevron, pin }: {
  icon: React.ReactNode; label: string; active?: boolean; child?: boolean; chevron?: React.ReactNode; pin?: boolean;
}) => (
  <SideItem href="#" $active={active} $child={child}>
    <SideChevron>{chevron}</SideChevron>
    {icon}
    <SideLabel>{label}</SideLabel>
    {pin && <PinSlot><Pin /></PinSlot>}
  </SideItem>
);

const Grey = () => <Line s={10} c="#858585" w={1.4} d="M3.500 1 7.500 5 3.500 9" />;

export default function App() {
  return (
    <Screen>
      <GlobalStyle />
      <Gradients />

      <TitleBar>
        <Tab>
          <Folder />
          <TabLabel>Response Documents</TabLabel>
          <TabClose aria-label="Close tab"><Close /></TabClose>
        </Tab>
        <Tab $active>
          <Folder />
          <TabLabel>Response Documents</TabLabel>
          <TabClose aria-label="Close tab"><Close /></TabClose>
        </Tab>
        <NewTab aria-label="New tab"><Line s={10} c="#222" d="M5 0v10M0 5h10" /></NewTab>
        <WindowButtons>
          <WindowButton aria-label="Minimize"><Line s={10} c="#000" d="M0 5.500h10" /></WindowButton>
          <WindowButton aria-label="Restore"><Line s={10} c="#000" d="M.5 3.500q0-1 1-1h5q1 0 1 1v5q0 1-1 1h-5q-1 0-1-1zM3 .5h4.500q2 0 2 2V7" /></WindowButton>
          <WindowButton aria-label="Close"><Close s={11} /></WindowButton>
        </WindowButtons>
      </TitleBar>

      <AddressRow>
        <NavButton aria-label="Back"><Line s={14} d="M13 7H1M6.500 1.500 1 7l5.500 5.500" /></NavButton>
        <NavButton aria-label="Forward"><Line s={14} c="#a8a8a8" d="M1 7h12M7.500 1.500 13 7l-5.500 5.500" /></NavButton>
        <NavButton aria-label="Up"><Line s={14} d="M7 13V1M1.500 6.500 7 1l5.500 5.500" /></NavButton>
        <NavButton aria-label="Refresh"><Line s={14} d="M12.700 6A6 6 0 1 1 10.500 2.200L12.500 4M12.700 1v3.200H9.500" /></NavButton>
        <Crumbs aria-label="Location">
          <Monitor />
          <CrumbGap><Chevron /></CrumbGap>
          <a href="#">This PC</a>
          <CrumbGap><Chevron /></CrumbGap>
          <a href="#">{"uploads (\\\\webtech3) (U:)"}</a>
          <CrumbGap><Chevron /></CrumbGap>
          <a href="#">Response Documents</a>
          <CrumbGap><Chevron /></CrumbGap>
        </Crumbs>
        <SearchField>
          <BareInput aria-label="Search Response Documents" placeholder="Search Response Documents" />
          <Line s={12} d="M8.500 4.700a3.800 3.800 0 1 1-7.600 0 3.800 3.800 0 0 1 7.600 0zM7.500 7.500 11.300 11.300" />
        </SearchField>
      </AddressRow>

      <Toolbar>
        <ToolButton>
          <svg width="16" height="16" viewBox="0 0 16 16" fill="none">
            <circle cx="8" cy="8" r="7.200" stroke="#5c5c5c" />
            <path d="M8 4.500v7M4.500 8h7" stroke="#1681dc" strokeWidth="1.200" />
          </svg>
          New <Caret />
        </ToolButton>
        <ToolSeparator $before={15} $after={2} />
        <IconTool aria-label="Cut"><Scissors /></IconTool>
        <IconTool aria-label="Copy"><Copy /></IconTool>
        <IconTool aria-label="Paste"><Paste /></IconTool>
        <IconTool aria-label="Rename"><Rename /></IconTool>
        <IconTool aria-label="Share"><Share /></IconTool>
        <IconTool aria-label="Delete"><Trash /></IconTool>
        <ToolSeparator $before={2} />
        <ToolButton><Sort />Sort <Caret /></ToolButton>
        <ToolGap />
        <ToolButton><Line s={16} c="#4f4f4f" d="M0 2.500h16M0 6.500h16M0 10.500h16M0 14.500h16" />View <Caret /></ToolButton>
        <ToolSeparator />
        <ToolButton><Extract />Extract all</ToolButton>
        <ToolSeparator />
        <ToolButton aria-label="See more"><Dots r={1.600} /></ToolButton>
        <Spring />
        <ToolButton><DetailsIcon />Details</ToolButton>
      </Toolbar>

      <Body>
        <SidePane>
          <Side aria-label="Folders">
            <SideEntry icon={<Home />} label="Home" />
            <SideEntry icon={<Gallery />} label="Gallery" />
            <SideRule />
            {pinned.map(([label, icon]) => (
              <SideEntry key={label} icon={icon} label={label} active={label === "Response Documents"} pin />
            ))}
            <SideRule />
            <SideEntry icon={<ThisPC />} label="This PC" chevron={<Line s={10} c="#222" w={1.500} d="M1 3 5 6.500 9 3" />} />
            <SideEntry child icon={<Disk />} label="Local Disk (C:)" chevron={<Grey />} />
            {drives.map((d) => (
              <SideEntry key={d} child icon={<NetDrive off={d.startsWith("c$")} />} label={d} chevron={<Grey />} />
            ))}
            <SideEntry icon={<Network />} label="Network" chevron={<Grey />} />
          </Side>
          <ScrollTrack><ScrollThumb $size="94%" /></ScrollTrack>
        </SidePane>

        <FilePane>
          <FileTable>
            <Head>
              <HeadRow>
                <HeadCell $first>Name</HeadCell>
                <HeadCell>
                  <HeadSort>
                    Date modified
                    <Line s={8} c="#777" d="M1 1.500 4 4.500 7 1.500" />
                  </HeadSort>
                </HeadCell>
                <HeadCell>Type</HeadCell>
                <HeadCell>Size</HeadCell>
              </HeadRow>
            </Head>
            <Rows>
              {files.map(([name, date, size], i) => {
                const word = name.startsWith("WebCam Monitor");
                return (
                  <FileRow key={name} $state={i === 3 ? "selected" : i === 13 ? "hover" : undefined}>
                    <NameCell>{word ? <WordDoc /> : <ZipFolder />}{name}</NameCell>
                    <Cell>{date}</Cell>
                    <Cell>{word ? "Microsoft Word D..." : ZIP}</Cell>
                    <Cell $right>{size}</Cell>
                  </FileRow>
                );
              })}
            </Rows>
          </FileTable>
          <ScrollTrack><ScrollThumb $size="91px" /></ScrollTrack>
        </FilePane>

        <DetailsPane>
          <Preview><BigZip /></Preview>
          <DetailsBody>
            <DetailsTitle>Screen Cast Session 505 Completed 2026-09-15.tar</DetailsTitle>
            <CardButton><Share />Share</CardButton>
            <DetailsHeading>Details</DetailsHeading>
            <Facts>
              <FactName>Type</FactName><FactValue>Compressed Archive Folder</FactValue>
              <FactName>Size</FactName><FactValue>5.97 MB</FactValue>
              <FactName>File location</FactName><FactValue>{"U:\\Response Documents"}</FactValue>
              <FactName>Date modified</FactName><FactValue>9/15/2026 9:52 AM</FactValue>
            </Facts>
            <CardButton><Wrench />Properties</CardButton>
          </DetailsBody>
        </DetailsPane>
      </Body>

      <StatusBar>
        <StatusText>276 items</StatusText>
        <StatusSeparator />
        <StatusText>1 item selected</StatusText>
        <StatusSize>5.97 MB</StatusSize>
        <StatusSeparator />
        <Spring />
        <ViewButton $on aria-label="Details view"><Line s={12} c="#444" d="M0 1.500h12M0 4.500h12M0 7.500h12M0 10.500h12" /></ViewButton>
        <ViewButton aria-label="Large icons"><Line s={12} c="#444" d="M.5 .5h11v9H.5zM0 11.500h12" /></ViewButton>
      </StatusBar>

      <Taskbar>
        <TaskCenter>
          <StartButton aria-label="Start"><Windows /></StartButton>
          <TaskSearch>
            <Line s={16} c="#222" w={1.600} d="M12 6.800a5.200 5.200 0 1 1-10.400 0 5.200 5.200 0 0 1 10.400 0zM10.600 10.600 14.800 14.800" />
            <BareInput aria-label="Search" placeholder="Search" />
          </TaskSearch>
          <TaskButton aria-label="File Explorer"><ActivePlate /><TaskIcon><Explorer /></TaskIcon><TaskMark $active /></TaskButton>
          <TaskButton aria-label="Microsoft Store"><TaskIcon><Store /></TaskIcon></TaskButton>
          <TaskButton aria-label="Chrome"><TaskIcon><Chrome /></TaskIcon><TaskMark /></TaskButton>
          <TaskButton aria-label="Chrome, work profile"><TaskIcon><Chrome /><Badge $kind="mail"><MailGlyph /></Badge></TaskIcon><TaskMark /></TaskButton>
          <TaskButton aria-label="Chrome, second profile"><TaskIcon><Chrome /><Badge $kind="letter">a</Badge></TaskIcon></TaskButton>
          <TaskButton aria-label="Zoom"><TaskIcon><ZIcon /></TaskIcon><TaskMark /></TaskButton>
          <TaskButton aria-label="Edge"><TaskIcon><Edge /></TaskIcon><TaskMark /></TaskButton>
          <TaskButton aria-label="Cursor"><TaskIcon><Cube /><Badge $kind="count">10</Badge></TaskIcon><TaskMark /></TaskButton>
        </TaskCenter>
        <Tray>
          <TrayChevron aria-label="Hidden icons"><Line s={12} c="#222" w={1.500} d="M1.500 8.500 6 4l4.500 4.500" /></TrayChevron>
          <TrayButton aria-label="Network"><NetTray /></TrayButton>
          <TrayButton aria-label="Volume"><Volume /></TrayButton>
          <Clock><span>9:56 AM</span><span>9/15/2026</span></Clock>
        </Tray>
      </Taskbar>

      <VoiceBar>
        <VoiceGrip />
        <VoiceButton aria-label="Voice typing"><Mic /></VoiceButton>
        <VoiceButton aria-label="More options"><Dots r={1.100} /></VoiceButton>
      </VoiceBar>
      <Pill />
    </Screen>
  );
}
